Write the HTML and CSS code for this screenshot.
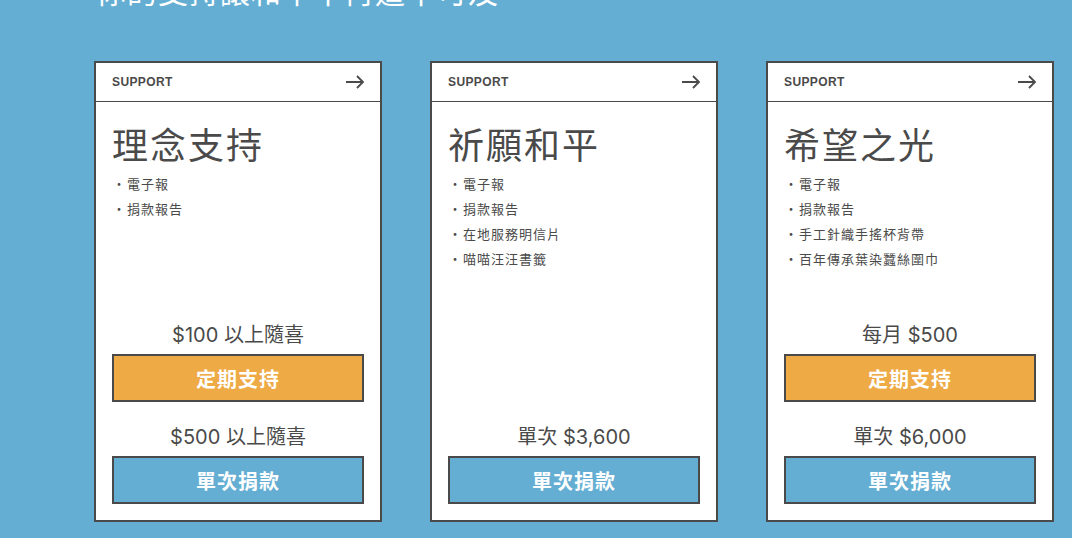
FILE: index.html
```html
<!DOCTYPE html>
<html lang="zh-Hant">
  <head>
    <meta charset="UTF-8" />
    <title>支持方案</title>
    <link rel="stylesheet" href="styles.css">
  </head>
  <body>
    <section class="support">
      <h2 class="support-title">你的支持讓和平不再遙不可及</h2>

      <div class="plans">
        <!-- 理念支持 -->
        <div class="plan">
          <div class="plan-head">
            <span class="plan-tag">SUPPORT</span>
            <svg class="plan-arrow" width="20" height="14" viewBox="0 0 20 14">
              <path d="M1 7 H18 M12 1 L18 7 L12 13" fill="none" stroke="#4a4a4a" stroke-width="1.8"/>
            </svg>
          </div>
          <div class="plan-body">
            <h3 class="plan-name">理念支持</h3>
            <ul class="plan-list">
              <li>電子報</li>
              <li>捐款報告</li>
            </ul>
            <div class="plan-prices">
              <p class="plan-price">$100 以上隨喜</p>
              <button class="btn btn-orange">定期支持</button>
              <p class="plan-price">$500 以上隨喜</p>
              <button class="btn btn-blue">單次捐款</button>
            </div>
          </div>
        </div>

        <!-- 祈願和平 -->
        <div class="plan">
          <div class="plan-head">
            <span class="plan-tag">SUPPORT</span>
            <svg class="plan-arrow" width="20" height="14" viewBox="0 0 20 14">
              <path d="M1 7 H18 M12 1 L18 7 L12 13" fill="none" stroke="#4a4a4a" stroke-width="1.8"/>
            </svg>
          </div>
          <div class="plan-body">
            <h3 class="plan-name">祈願和平</h3>
            <ul class="plan-list">
              <li>電子報</li>
              <li>捐款報告</li>
              <li>在地服務明信片</li>
              <li>喵喵汪汪書籤</li>
            </ul>
            <div class="plan-prices">
              <p class="plan-price">單次 $3,600</p>
              <button class="btn btn-blue">單次捐款</button>
            </div>
          </div>
        </div>

        <!-- 希望之光 -->
        <div class="plan">
          <div class="plan-head">
            <span class="plan-tag">SUPPORT</span>
            <svg class="plan-arrow" width="20" height="14" viewBox="0 0 20 14">
              <path d="M1 7 H18 M12 1 L18 7 L12 13" fill="none" stroke="#4a4a4a" stroke-width="1.8"/>
            </svg>
          </div>
          <div class="plan-body">
            <h3 class="plan-name">希望之光</h3>
            <ul class="plan-list">
              <li>電子報</li>
              <li>捐款報告</li>
              <li>手工針織手搖杯背帶</li>
              <li>百年傳承葉染蠶絲圍巾</li>
            </ul>
            <div class="plan-prices">
              <p class="plan-price">每月 $500</p>
              <button class="btn btn-orange">定期支持</button>
              <p class="plan-price">單次 $6,000</p>
              <button class="btn btn-blue">單次捐款</button>
            </div>
          </div>
        </div>
      </div>
    </section>
  </body>
</html>
```

FILE: styles.css
```css
body {
  margin: 0;
  padding: 0;
  background: #65aed3;
  overflow: hidden;
  color: #4a4a4a;
  font-family: Inter, "Noto Sans CJK TC", sans-serif;
}

.support {
  margin-top: -28px;
  padding: 0 18px 0 94px;
}

.support-title {
  margin: 0 0 49px 2px;
  color: #fff;
  font-size: 30px;
  font-weight: 400;
  line-height: 40px;
  letter-spacing: 1px;
}

.plans {
  display: flex;
  gap: 48px;
}

.plan {
  width: 288px;
  height: 461px;
  box-sizing: border-box;
  background: #fff;
  border: 2px solid #4a4a4a;
  display: flex;
  flex-direction: column;
}

.plan-head {
  height: 38px;
  padding: 0 16px;
  border-bottom: 1px solid #4a4a4a;
  display: flex;
  align-items: center;
  justify-content: space-between;
}

.plan-tag {
  font-family: "Liberation Sans", Arial, sans-serif;
  font-size: 12px;
  font-weight: 700;
  letter-spacing: 0.4px;
}

.plan-arrow {
  margin-right: -1px;
}

.plan-body {
  flex: 1;
  padding: 16px;
  display: flex;
  flex-direction: column;
}

.plan-name {
  margin: 0;
  font-family: "Noto Sans CJK TC", sans-serif;
  font-size: 36px;
  font-weight: 400;
  line-height: 50px;
  letter-spacing: 2px;
}

.plan-list {
  margin: 3px 0 0;
  padding: 0;
  list-style: none;
  font-family: "Noto Sans CJK TC", sans-serif;
  font-size: 13px;
  line-height: 25px;
  letter-spacing: 1px;
}

.plan-list li::before {
  content: "・";
  display: inline-block;
  width: 15px;
  text-align: center;
}

.plan-prices {
  margin-top: auto;
  display: flex;
  flex-direction: column;
}

.plan-price {
  margin: 20px 0 4px;
  font-size: 20px;
  line-height: 30px;
  text-align: center;
}

.btn {
  height: 48px;
  border: 2px solid #4a4a4a;
  color: #fff;
  font-family: "Noto Sans CJK TC", sans-serif;
  font-size: 20px;
  font-weight: 700;
  letter-spacing: 1px;
  cursor: pointer;
}

.btn-orange {
  background: #eeaa45;
}

.btn-blue {
  background: #65aed3;
}
```
